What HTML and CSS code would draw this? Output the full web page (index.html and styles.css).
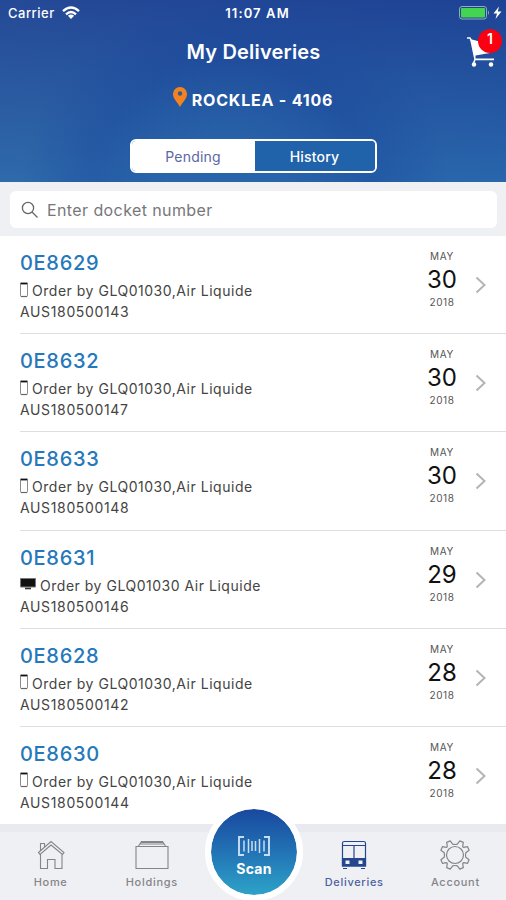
FILE: index.html
```html
<!DOCTYPE html>
<html lang="en">
<head>
    <meta charset="UTF-8">
    <meta name="viewport" content="width=device-width, initial-scale=1.0">
    <title>My Deliveries</title>
    <link rel="stylesheet" href="styles.css">
</head>
<body>
    <svg class="symbols">
        <symbol id="phone" viewBox="0 0 8 16">
            <rect x="0.5" y="1.5" width="7" height="13" rx="0.8" fill="#fff" stroke="#8a8a8a"/>
            <path d="M0.500 1.500h7" stroke="#111" stroke-width="1.800"/>
            <path d="M1 14.500h6" stroke="#666" stroke-width="1.200"/>
        </symbol>
        <symbol id="desktop" viewBox="0 0 16 12">
            <path d="M0.5 0.5h15v8.500h-15z" fill="#111" stroke="#777"/>
            <path d="M5 10.500h6" stroke="#333" stroke-width="1.600"/>
        </symbol>
        <symbol id="chevron" viewBox="0 0 12 18">
            <path d="M1.5 1.5L9.5 9L1.5 16.5" fill="none" stroke="#b4b4b6" stroke-width="2"/>
        </symbol>
    </svg>

    <header class="header">
        <div class="status-bar">
            <div class="carrier">
                <span>Carrier</span>
                <svg width="18" height="14" viewBox="0 0 18 14" fill="none" stroke="#fff" stroke-width="2.3">
                    <path d="M1 5.2Q9-2.2 17 5.2M4 8.3Q9 3.7 14 8.3"/>
                    <path d="M9 13L5.9 9.8Q9 7.2 12.1 9.8z" fill="#fff" stroke="none"/>
                </svg>
            </div>
            <div class="time">11:07 AM</div>
            <div class="battery">
                <svg width="44" height="16" viewBox="0 0 44 16">
                    <rect x="0.5" y="1.5" width="27" height="12.5" rx="2.5" fill="none" stroke="#8fb0ae"/>
                    <rect x="2" y="3" width="24" height="9.5" rx="1" fill="#43d552"/>
                    <path d="M29 5.5q2 2.200 0 4.400z" fill="#9aabbd"/>
                    <path d="M40 1.500L34.500 8.500h3.500l-1.500 5.500L42.500 6.500h-3.700z" fill="#fff"/>
                </svg>
            </div>
        </div>
        <h1 class="title">My Deliveries</h1>
        <div class="location">
            <svg width="14" height="20" viewBox="0 0 14 20">
                <path d="M7 0a7 7 0 0 0-7 7c0 4.500 4 7.500 7 13c3-5.500 7-8.500 7-13a7 7 0 0 0-7-7z" fill="#f58220"/>
                <circle cx="7" cy="6.500" r="2.200" fill="#315a94"/>
            </svg>
            <span>ROCKLEA - 4106</span>
        </div>
        <div class="tabs">
            <div class="tab active">Pending</div>
            <div class="tab">History</div>
        </div>
        <div class="cart">
            <svg width="30" height="32" viewBox="0 0 30 32">
                <path d="M1 2H4L5.500 5" fill="none" stroke="#fff" stroke-width="1.500"/>
                <path d="M4 3L27 9L24 17L9.500 19.500L9.500 22.500H28V24.300H8.500L7.500 20z" fill="#fff"/>
                <circle cx="8" cy="28.500" r="2.200" fill="#fff"/>
                <circle cx="25" cy="28.500" r="2.200" fill="#fff"/>
                <path d="M9 23.500L7.500 27" stroke="#fff" stroke-width="1.500"/>
            </svg>
            <span class="badge">1</span>
        </div>
    </header>

    <div class="search">
        <div class="search-box">
            <svg width="18" height="18" viewBox="0 0 18 18" fill="none" stroke="#666" stroke-width="1.300">
                <circle cx="7" cy="7" r="5.600"/>
                <path d="M11 11L16.500 16.500"/>
            </svg>
            <span>Enter docket number</span>
        </div>
    </div>

    <main class="list">
        <div class="row">
            <div class="info">
                <h2>0E8629</h2>
                <p class="order"><svg class="phone"><use href="#phone"/></svg>Order by GLQ01030,Air Liquide</p>
                <p>AUS180500143</p>
            </div>
            <div class="date"><span>MAY</span><strong>30</strong><span>2018</span></div>
            <svg class="chevron"><use href="#chevron"/></svg>
        </div>
        <div class="row">
            <div class="info">
                <h2>0E8632</h2>
                <p class="order"><svg class="phone"><use href="#phone"/></svg>Order by GLQ01030,Air Liquide</p>
                <p>AUS180500147</p>
            </div>
            <div class="date"><span>MAY</span><strong>30</strong><span>2018</span></div>
            <svg class="chevron"><use href="#chevron"/></svg>
        </div>
        <div class="row">
            <div class="info">
                <h2>0E8633</h2>
                <p class="order"><svg class="phone"><use href="#phone"/></svg>Order by GLQ01030,Air Liquide</p>
                <p>AUS180500148</p>
            </div>
            <div class="date"><span>MAY</span><strong>30</strong><span>2018</span></div>
            <svg class="chevron"><use href="#chevron"/></svg>
        </div>
        <div class="row">
            <div class="info">
                <h2>0E8631</h2>
                <p class="order"><svg class="desktop"><use href="#desktop"/></svg>Order by GLQ01030 Air Liquide</p>
                <p>AUS180500146</p>
            </div>
            <div class="date"><span>MAY</span><strong>29</strong><span>2018</span></div>
            <svg class="chevron"><use href="#chevron"/></svg>
        </div>
        <div class="row">
            <div class="info">
                <h2>0E8628</h2>
                <p class="order"><svg class="phone"><use href="#phone"/></svg>Order by GLQ01030,Air Liquide</p>
                <p>AUS180500142</p>
            </div>
            <div class="date"><span>MAY</span><strong>28</strong><span>2018</span></div>
            <svg class="chevron"><use href="#chevron"/></svg>
        </div>
        <div class="row">
            <div class="info">
                <h2>0E8630</h2>
                <p class="order"><svg class="phone"><use href="#phone"/></svg>Order by GLQ01030,Air Liquide</p>
                <p>AUS180500144</p>
            </div>
            <div class="date"><span>MAY</span><strong>28</strong><span>2018</span></div>
            <svg class="chevron"><use href="#chevron"/></svg>
        </div>
    </main>

    <nav class="nav">
        <div class="nav-item">
            <svg width="34" height="32" viewBox="0 0 34 32" fill="none" stroke="#858589" stroke-width="1.100">
                <path d="M4.500 14.500L17 3.500L30 14.500L28.500 16.500L17 7L6 16.500zM6.500 12.500V5.500H10.500V9M6.500 16.500V30.500H13.500V21.500H21V30.500H28V16"/>
            </svg>
            <span>Home</span>
        </div>
        <div class="nav-item">
            <svg width="34" height="32" viewBox="0 0 34 32" fill="none" stroke="#858589" stroke-width="1.100">
                <path d="M1 8.500H33V30.500H1zM3.500 8L6.500 3.500H27.500L30.500 8M5 6H29"/>
                <path d="M6 4H28" stroke-width="2"/>
            </svg>
            <span>Holdings</span>
        </div>
        <div class="nav-item scan">
            <div class="scan-button">
                <svg width="32" height="20" viewBox="0 0 32 20" fill="none" stroke="#c9def4" stroke-width="1.900">
                    <path d="M6 1H1V19H6M26 1H31V19H26"/>
                    <path d="M6 4.500V15.500M10.500 3V17M14 5V15M17.500 5V15M21.500 3V17M26 4.500V15.500" stroke-width="1.500"/>
                </svg>
                <span>Scan</span>
            </div>
        </div>
        <div class="nav-item current">
            <svg width="34" height="32" viewBox="0 0 34 32" fill="none" stroke="#24468f" stroke-width="1.200">
                <path d="M5.500 28V5Q5.500 3.500 7.500 3.500H26.500Q28.500 3.500 28.500 5V28zM5.500 7.500H28.500M17 7.500V20"/>
                <path d="M5.500 20.500H28.500V28H5.500z" fill="#24468f"/>
                <path d="M8.500 22.500h4v3.500h-4zM21.500 22.500h4v3.500h-4z" fill="#eff0f4" stroke="none"/>
                <path d="M6 30.500H10M24 30.500H28"/>
            </svg>
            <span>Deliveries</span>
        </div>
        <div class="nav-item">
            <svg width="34" height="32" viewBox="0 0 34 32" fill="none" stroke="#858589" stroke-width="1.200">
                <circle cx="17" cy="17" r="8.500"/>
                <path stroke-linejoin="round" d="M14.700 6.200L12.200 2.900L8.700 4.400L9.300 8.400Q9.200 9.200 8.400 9.300L4.400 8.700L2.900 12.200L6.200 14.700Q6.800 17 6.200 19.300L2.900 21.800L4.400 25.300L8.400 24.700Q9.200 24.800 9.300 25.600L8.700 29.600L12.200 31.100L14.700 27.800Q17 27.200 19.300 27.800L21.800 31.100L25.300 29.600L24.700 25.600Q24.800 24.800 25.600 24.700L29.600 25.300L31.100 21.800L27.800 19.300Q27.200 17 27.800 14.700L31.100 12.200L29.600 8.700L25.600 9.300Q24.800 9.200 24.700 8.400L25.300 4.400L21.800 2.900L19.300 6.200Q17 6.800 14.700 6.200z"/>
            </svg>
            <span>Account</span>
        </div>
    </nav>
</body>
</html>
```
FILE: styles.css
```css
* {
    box-sizing: border-box;
}
body {
    margin: 0;
    height: 900px;
    display: flex;
    flex-direction: column;
    overflow: hidden;
    font-family: Inter, "Liberation Sans", sans-serif;
    background: white;
}
svg {
    flex-shrink: 0;
}
.symbols {
    display: none;
}
.header {
    position: relative;
    height: 182px;
    flex-shrink: 0;
    display: flex;
    flex-direction: column;
    align-items: center;
    color: white;
    background:
        radial-gradient(circle at 225px 200px, rgba(50, 120, 180, 0.35) 60px, rgba(50, 120, 180, 0) 145px),
        radial-gradient(circle at 235px 200px, rgba(24, 70, 155, 0.4) 140px, rgba(24, 70, 155, 0) 215px),
        linear-gradient(100deg, rgba(60, 90, 150, 0.2), rgba(20, 50, 145, 0.15)),
        linear-gradient(#1f4596, #2c6fb0);
}
.status-bar {
    width: 100%;
    height: 26px;
    padding: 0 3px 0 8px;
    display: grid;
    grid-template-columns: 1fr auto 1fr;
    align-items: center;
    font-size: 13px;
    font-weight: 500;
    letter-spacing: 0.5px;
}
.carrier {
    display: flex;
    align-items: center;
    gap: 7px;
}
.time {
    margin-right: -4px;
    font-weight: 600;
    letter-spacing: 1.1px;
}
.battery {
    display: flex;
    justify-content: flex-end;
}
.title {
    margin: 13px 0 0;
    padding-left: 1px;
    font-size: 20px;
    line-height: 26px;
    font-weight: 600;
    letter-spacing: 0.2px;
}
.location {
    display: flex;
    align-items: center;
    gap: 5px;
    margin-top: 22px;
    height: 24px;
    font-size: 16px;
    font-weight: 700;
    letter-spacing: 0.8px;
}
.location svg {
    margin-bottom: 4px;
}
.location span {
    padding-top: 1px;
}
.tabs {
    display: flex;
    width: 247px;
    height: 34px;
    margin-top: 28px;
    border: 2px solid white;
    border-radius: 6px;
    overflow: hidden;
    font-size: 14px;
    font-weight: 500;
    letter-spacing: 0.2px;
}
.tab {
    flex: 1;
    display: flex;
    align-items: center;
    justify-content: center;
    background: #2163aa;
}
.tab.active {
    flex: 0 0 123px;
    background: white;
    color: #5c67a5;
    font-weight: 400;
}
.cart {
    position: absolute;
    top: 36px;
    left: 466px;
}
.badge {
    position: absolute;
    left: 12px;
    top: -7px;
    width: 24px;
    height: 24px;
    border-radius: 50%;
    background: #fa0010;
    font-size: 14px;
    font-weight: 600;
    line-height: 20px;
    text-align: center;
}
.search {
    height: 54px;
    flex-shrink: 0;
    padding: 9px 9px 8px 10px;
    background: #eff0f4;
}
.search-box {
    height: 37px;
    padding-left: 11px;
    display: flex;
    align-items: center;
    gap: 8px;
    background: white;
    border-radius: 6px;
    color: #77777b;
    font-size: 16px;
    letter-spacing: 0.4px;
}
.list {
    height: 588px;
    flex-shrink: 0;
    overflow: hidden;
}
.row {
    position: relative;
    display: flex;
    height: 98.200px;
    margin-left: 20px;
    padding-top: 13px;
    border-bottom: 1px solid #dedee0;
}
.info {
    flex: 1;
}
.info h2 {
    margin: 0;
    font-size: 20px;
    line-height: 28px;
    font-weight: 500;
    letter-spacing: 0.7px;
    color: #2578bb;
}
.info p {
    margin: 0;
    font-size: 14px;
    line-height: 21px;
    letter-spacing: 0.65px;
    color: #444;
}
.info .order {
    display: flex;
    align-items: center;
    margin-top: 3px;
    letter-spacing: 0.52px;
}
.phone {
    width: 8px;
    height: 16px;
    margin: 0 4px 2px 0;
}
.desktop {
    width: 16px;
    height: 12px;
    margin: 0 4px 2px 0;
}
.date {
    width: 50px;
    display: flex;
    flex-direction: column;
    align-items: center;
    font-size: 10px;
    line-height: 14px;
    letter-spacing: 0.6px;
    color: #555;
}
.date strong {
    padding-top: 2px;
    font-size: 24px;
    line-height: 30px;
    font-weight: 400;
    letter-spacing: 0;
    color: #111;
}
.chevron {
    width: 12px;
    height: 18px;
    margin: 27px 19px 0 8px;
}
.nav {
    height: 76px;
    flex-shrink: 0;
    display: grid;
    grid-template-columns: repeat(5, 1fr);
    border-top: 8px solid #e8eaef;
    background: #eff0f4;
}
.nav-item {
    display: flex;
    flex-direction: column;
    align-items: center;
    gap: 4px;
    padding-top: 6px;
    color: #858589;
    font-size: 11px;
    line-height: 16px;
    font-weight: 500;
    letter-spacing: 0.7px;
}
.nav-item.current {
    color: #4c619f;
}
.nav-item.scan {
    padding: 0;
}
.scan-button {
    width: 98px;
    height: 98px;
    flex-shrink: 0;
    margin: -29px 0 0 2px;
    padding-top: 27px;
    display: flex;
    flex-direction: column;
    align-items: center;
    gap: 5px;
    border: 6px solid white;
    border-radius: 50%;
    background: linear-gradient(#17429b, #2273b5 50%, #2faacb) border-box;
    background-clip: padding-box;
    color: white;
    font-size: 14px;
    font-weight: 700;
    letter-spacing: 0.3px;
}
```
